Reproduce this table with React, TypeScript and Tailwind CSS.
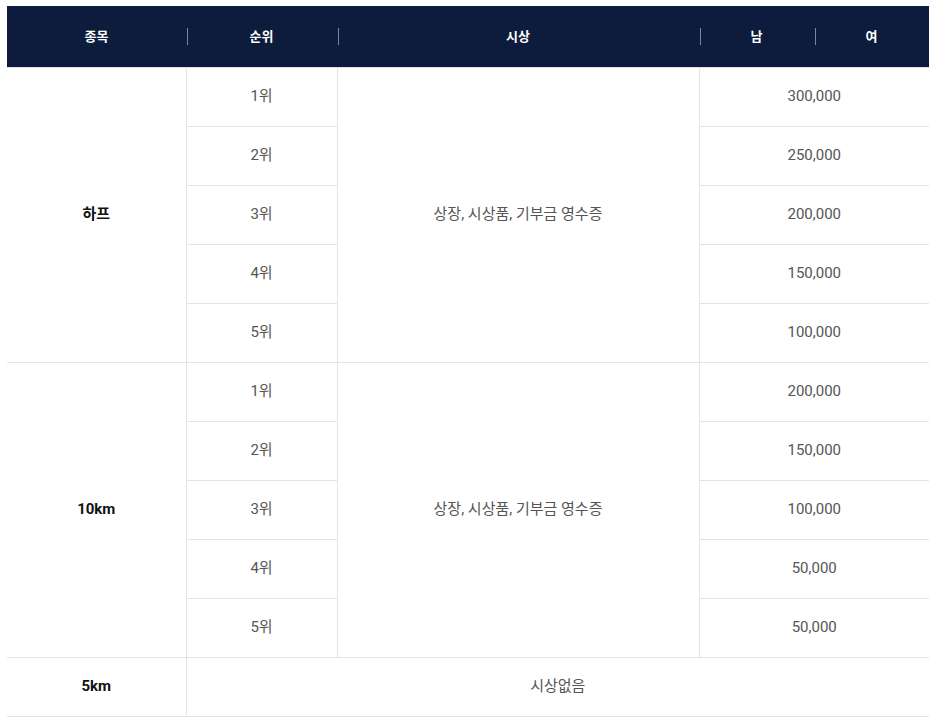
const groups = [
  {
    name: '하프',
    award: '상장, 시상품, 기부금 영수증',
    prizes: ['300,000', '250,000', '200,000', '150,000', '100,000'],
  },
  {
    name: '10km',
    award: '상장, 시상품, 기부금 영수증',
    prizes: ['200,000', '150,000', '100,000', '50,000', '50,000'],
  },
];

const heads = ['종목', '순위', '시상', '남', '여'];
const widths = ['w-[179px]', 'w-[151px]', 'w-[362px]', 'w-[115px]', 'w-[115px]'];

const cell = 'h-[59px] border-b border-[#e3e3ec] text-center align-middle p-0';

export default function App() {
  return (
    <div className="pt-[6px] pl-[7px] bg-white min-h-screen font-['Roboto','Noto_Sans_CJK_KR',sans-serif]">
      <table className="w-[922px] table-fixed border-collapse">
        <thead>
          <tr className="bg-[#0d1c3c]">
            {heads.map((h, i) => (
              <th
                key={h}
                className={`${widths[i]} relative h-[61px] border-b border-[#e3e3ec] text-[13px] font-bold text-white p-0`}
              >
                {i > 0 && (
                  <span className="absolute left-px top-[22px] h-[17px] w-px bg-[#7d8598]" />
                )}
                {h}
              </th>
            ))}
          </tr>
        </thead>
        <tbody className="text-[15px] text-[#555]">
          {groups.map((g) =>
            g.prizes.map((p, i) => (
              <tr key={g.name + i}>
                {i === 0 && (
                  <td rowSpan={5} className={`${cell} border-r font-bold text-[#111]`}>
                    {g.name}
                  </td>
                )}
                <td className={`${cell} border-r`}>{i + 1}위</td>
                {i === 0 && (
                  <td rowSpan={5} className={`${cell} border-r`}>
                    {g.award}
                  </td>
                )}
                <td colSpan={2} className={cell}>
                  {p}
                </td>
              </tr>
            ))
          )}
          <tr>
            <td className={`${cell} border-r font-bold text-[#111]`}>5km</td>
            <td colSpan={4} className={cell}>
              시상없음
            </td>
          </tr>
        </tbody>
      </table>
    </div>
  );
}
